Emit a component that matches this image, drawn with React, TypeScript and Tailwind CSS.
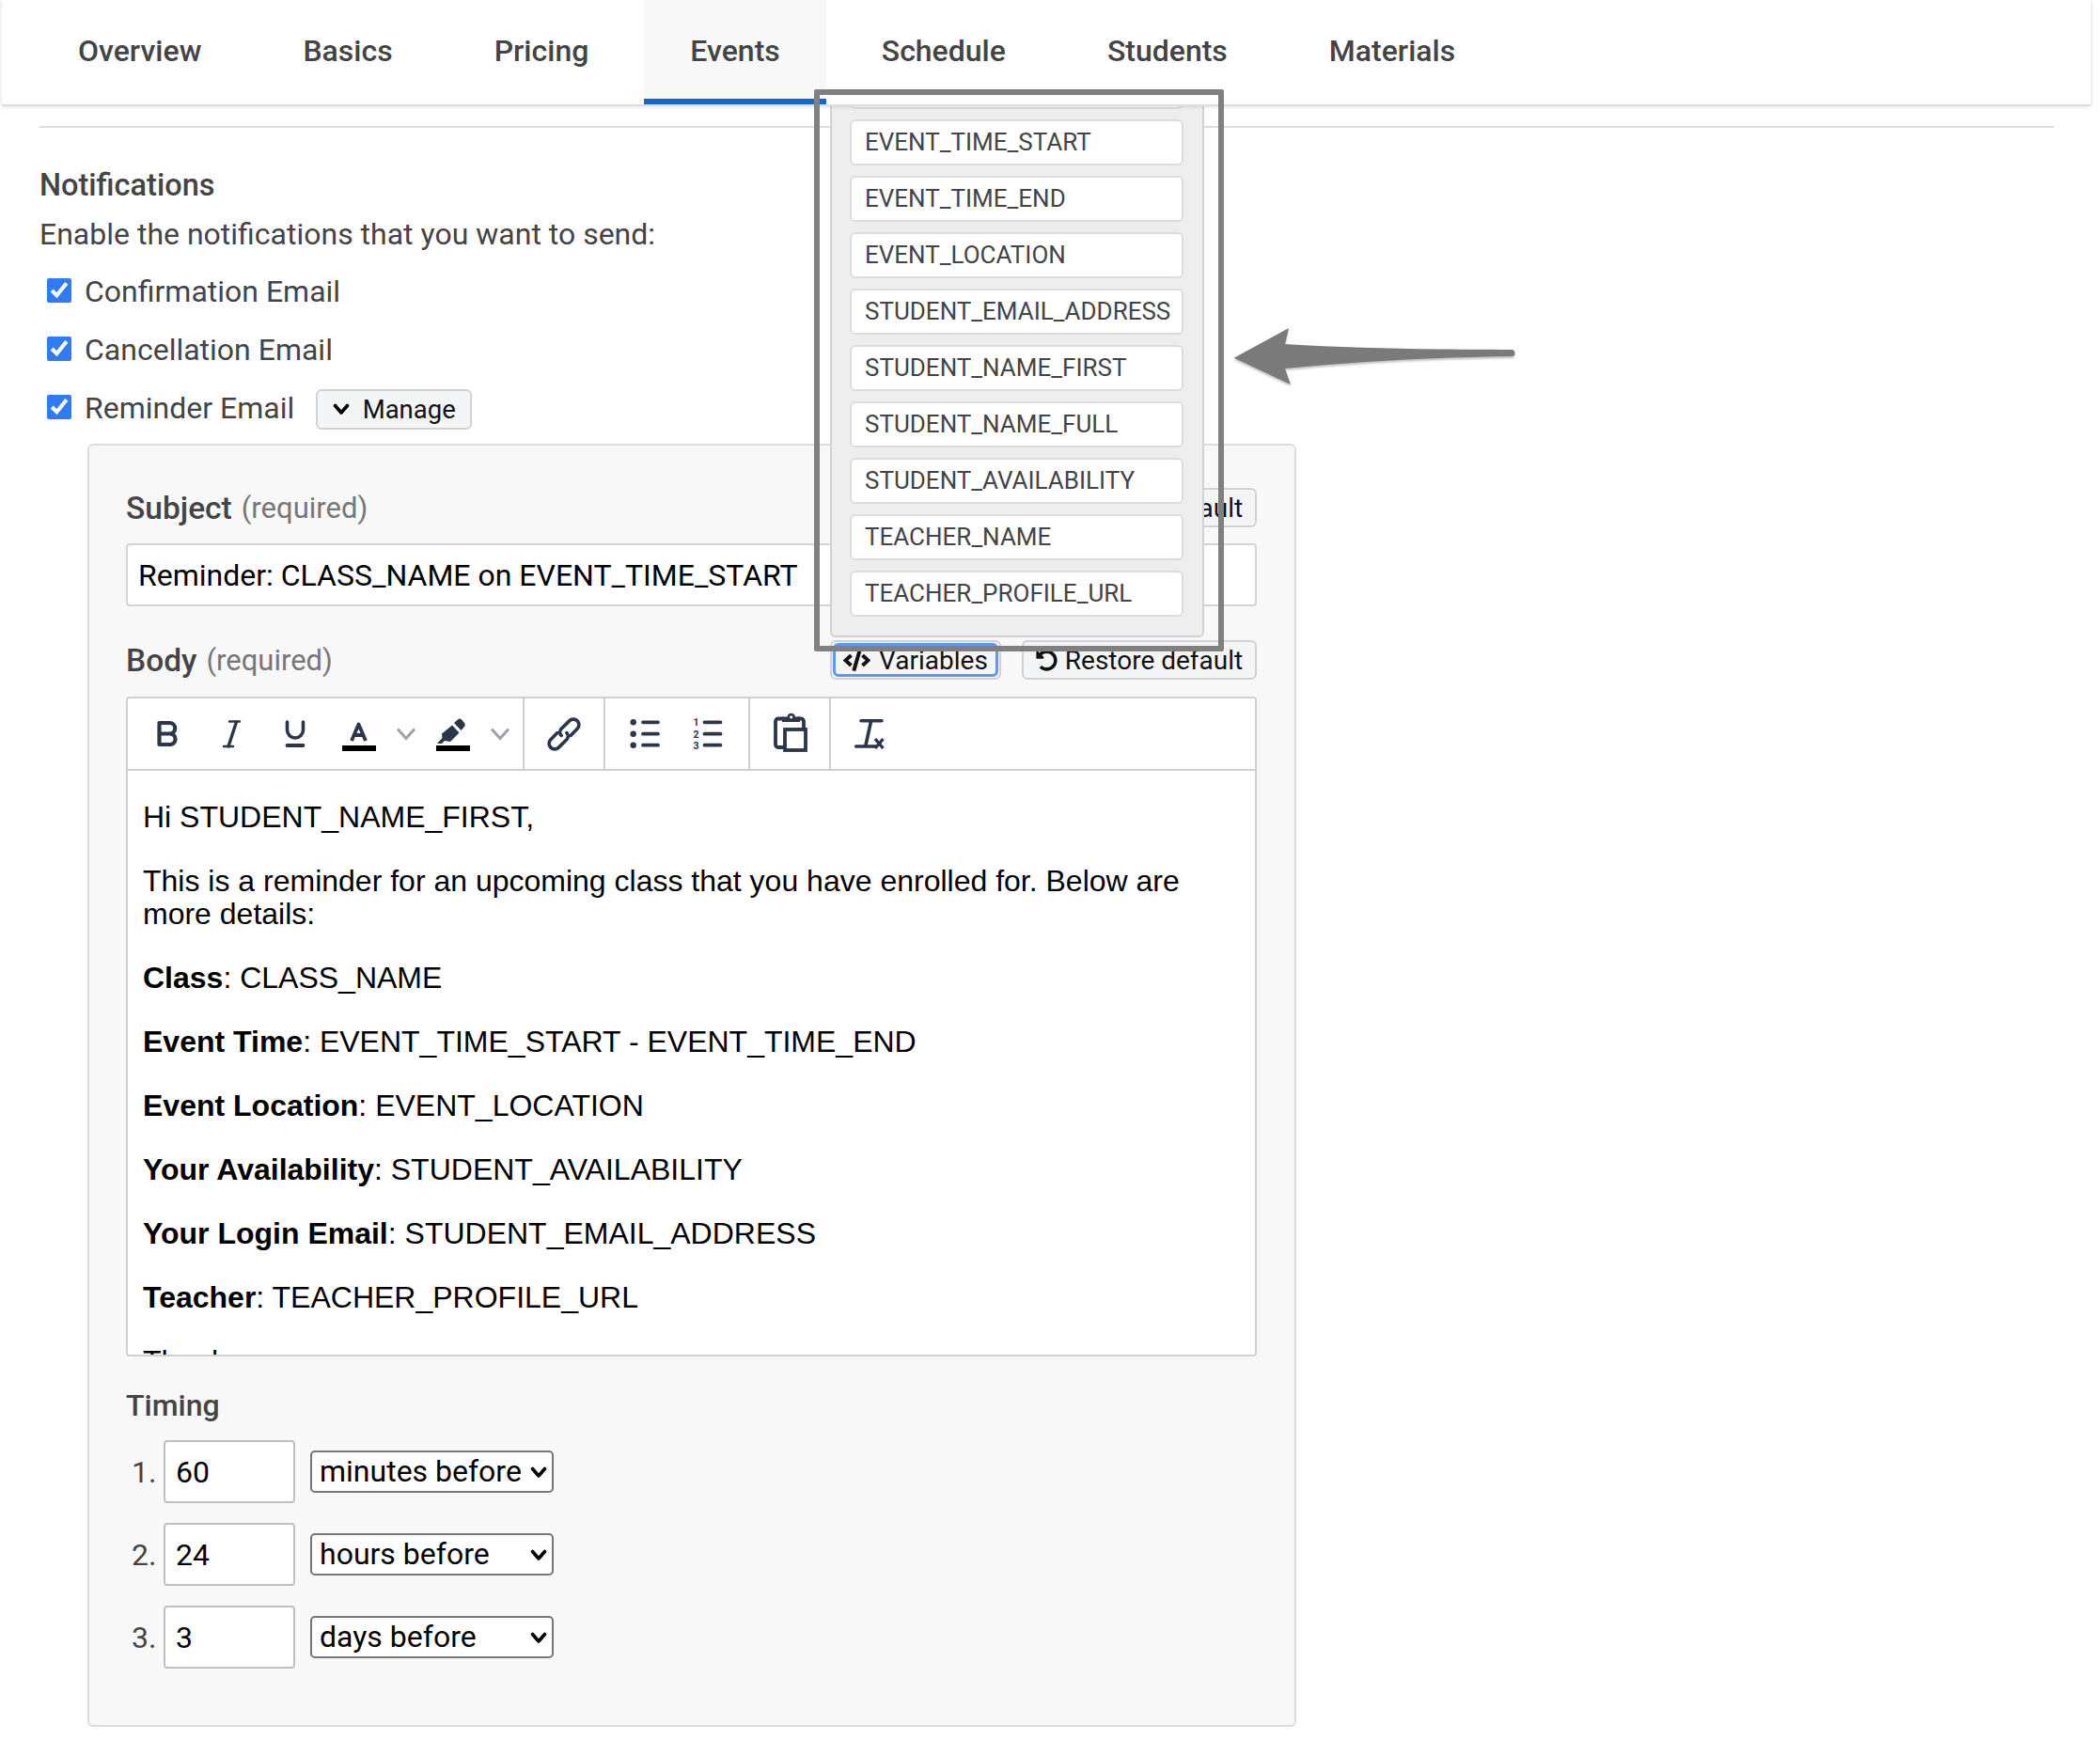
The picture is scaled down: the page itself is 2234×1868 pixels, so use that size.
import React from 'react';
import { FaCode, FaUndoAlt } from 'react-icons/fa';

const tabs = ['Overview', 'Basics', 'Pricing', 'Events', 'Schedule', 'Students', 'Materials'];

const variables = [
  'CLASS_NAME',
  'EVENT_TIME_START',
  'EVENT_TIME_END',
  'EVENT_LOCATION',
  'STUDENT_EMAIL_ADDRESS',
  'STUDENT_NAME_FIRST',
  'STUDENT_NAME_FULL',
  'STUDENT_AVAILABILITY',
  'TEACHER_NAME',
  'TEACHER_PROFILE_URL',
];

const timing = [
  { value: '60', unit: 'minutes before' },
  { value: '24', unit: 'hours before' },
  { value: '3', unit: 'days before' },
];

const INK = '#2b3648';

const ToolButton: React.FC<{ children: React.ReactNode; narrow?: boolean }> = ({ children, narrow }) => (
  <div className={`flex items-center justify-center h-full ${narrow ? 'w-[32px]' : 'w-[68px]'}`}>{children}</div>
);

const Icon: React.FC<{ children: React.ReactNode }> = ({ children }) => (
  <svg width="40" height="40" viewBox="0 0 40 40" fill="none" stroke={INK} strokeLinecap="round" strokeLinejoin="round" className="overflow-visible">
    {children}
  </svg>
);

const Chevron = () => (
  <svg width="24" height="16" viewBox="0 0 24 16" fill="none" stroke="#9ca3af" strokeWidth="3">
    <path d="M3 2.5 L12 12.5 L21 2.5" />
  </svg>
);

const Caret = () => (
  <svg width="18" height="13" viewBox="0 0 18 13" fill="none" stroke="#000" strokeWidth="3.6" strokeLinecap="round" strokeLinejoin="round">
    <path d="M2.5 2.5 L9 10 L15.5 2.5" />
  </svg>
);

const RestoreButton = () => (
  <button className="flex items-center justify-center gap-[8px] w-[250px] h-[42px] pt-[1px] rounded-[6px] border-2 border-[#d0d2d6] bg-[#f4f5f7] text-[28px] text-[#111]">
    <FaUndoAlt className="w-[23px] h-[23px]" />
    Restore default
  </button>
);

const VariablesButton = () => (
  <button className="w-[182px] h-[42px] rounded-[6px] border-2 border-[#d0d2d6] bg-[#f4f5f7] p-[1px] text-[28px] text-[#111]">
    <span className="flex items-center justify-center gap-[9px] w-full h-full pt-[1px] rounded-[6px] border-[3px] border-[#5a97f7]">
      <FaCode className="w-[29px] h-[25px]" />
      Variables
    </span>
  </button>
);

const Check: React.FC<{ label: string; children?: React.ReactNode }> = ({ label, children }) => (
  <div className="flex items-center h-[44px]">
    <input type="checkbox" defaultChecked className="w-[26px] h-[26px] m-0 ml-[8px] accent-[#2f7bf6]" />
    <span className="ml-[14px] pt-[2px] text-[32px] leading-[44px]">{label}</span>
    {children}
  </div>
);

const Paragraph: React.FC<{ children: React.ReactNode }> = ({ children }) => (
  <p className="mb-[33px] text-[32px] leading-[35px] text-black">{children}</p>
);

export default function App() {
  return (
    <div className="relative w-[2234px] h-[1868px] overflow-hidden bg-white font-[Roboto,sans-serif] text-[#444]">
      {/* Tabs */}
      <div className="relative z-20 ml-[2px] w-[2222px] h-[113px] bg-white border-b-2 border-[#deded9] shadow-[0_0_4px_rgba(0,0,0,0.18)] pl-[32px] flex gap-[10px]">
        {tabs.map((tab) => (
          <div
            key={tab}
            className={`px-[49px] h-[111px] flex items-center text-[32px] font-medium ${
              tab === 'Events' ? 'bg-[#f8f8f8] border-b-[6px] border-[#1a66c4] pt-[3px]' : 'pb-[3px]'
            }`}
          >
            {tab}
          </div>
        ))}
      </div>

      <div className="pl-[42px] pr-[49px]">
        <div className="mt-[21px] h-[2px] bg-[#deded9]" />
        <div className="mt-[39px] text-[32.5px] leading-[44px] font-medium">Notifications</div>
        <div className="mt-[8px] text-[32px] leading-[44px]">Enable the notifications that you want to send:</div>

        <div className="mt-[16px] flex flex-col gap-[18px]">
          <Check label="Confirmation Email" />
          <Check label="Cancellation Email" />
          <Check label="Reminder Email">
            <button className="ml-[23px] mt-[5px] w-[166px] h-[43px] flex items-center justify-center gap-[14px] rounded-[6px] border-2 border-[#d0d2d6] bg-[#f4f5f7] text-[27.5px] text-[#111]">
              <Caret />
              Manage
            </button>
          </Check>
        </div>

        {/* Reminder settings */}
        <div className="ml-[51px] mt-[17px] w-[1286px] rounded-[6px] border-2 border-[#dcdcdc] bg-[#f8f8f8] pl-[39px] pt-[45px] pb-[60px]">
          <div className="w-[1203px] h-[42px] flex items-center">
            <span className="pt-[2px] text-[33.5px] font-medium">Subject</span>
            <span className="ml-[10px] pt-[2px] text-[31px] text-[#777]">(required)</span>
            <div className="ml-auto flex gap-[22px]">
              <VariablesButton />
              <RestoreButton />
            </div>
          </div>
          <div className="mt-[17px] w-[1203px] h-[67px] rounded-[4px] border-2 border-[#d4d4d4] bg-white pl-[11px] pt-[1px] flex items-center text-[32px] text-black">
            Reminder: CLASS_NAME on EVENT_TIME_START
          </div>

          <div className="mt-[36px] w-[1203px] h-[42px] flex items-center">
            <span className="pt-[2px] text-[33.5px] font-medium">Body</span>
            <span className="ml-[10px] pt-[2px] text-[31px] text-[#777]">(required)</span>
            <div className="ml-auto flex gap-[22px]">
              <VariablesButton />
              <RestoreButton />
            </div>
          </div>

          {/* Editor */}
          <div className="mt-[18px] w-[1203px] h-[702px] overflow-hidden rounded-[4px] border-2 border-[#cdd0d4] bg-white">
            <div className="h-[77px] flex border-b-2 border-[#cdd0d4]">
              <div className="flex px-[8px] border-r-2 border-[#cdd0d4]">
                <ToolButton>
                  <Icon>
                    <path d="M11.5 8 H22.5 a5.7 5.7 0 0 1 0 11.5 H11.5 Z M11.5 19.5 H23.5 a5.8 5.8 0 0 1 0 11.5 H11.5 Z" strokeWidth="4.2" />
                  </Icon>
                </ToolButton>
                <ToolButton>
                  <Icon>
                    <path d="M18 6.5 H29 M12 33 H22" strokeWidth="2.4" />
                    <path d="M25.5 7 L17 33" strokeWidth="3.4" />
                  </Icon>
                </ToolButton>
                <ToolButton>
                  <Icon>
                    <path d="M11.5 7 V15.5 a8.5 8.5 0 0 0 17 0 V7" strokeWidth="3.6" />
                    <path d="M11.5 32 H28.5" strokeWidth="3.8" />
                  </Icon>
                </ToolButton>
                <ToolButton>
                  <Icon>
                    <path d="M12 27 L19.5 9.5 L27 27 M14.5 21 H24.5" strokeWidth="3.8" strokeLinecap="butt" />
                    <rect x="2" y="32" width="36" height="6" fill="#000" stroke="none" />
                  </Icon>
                </ToolButton>
                <ToolButton narrow>
                  <Chevron />
                </ToolButton>
                <ToolButton>
                  <Icon>
                    <path d="M21 8 L25 4.5 a3 3 0 0 1 4 0 L32 8 a3 3 0 0 1 0 4 L28.5 16 Z" fill={INK} stroke="none" />
                    <path d="M19 10.5 L26.5 18.5 L17 28 L11 27 L8 30 L3 30 L8.5 24 L8 19.5 Z" fill={INK} stroke="none" />
                    <rect x="2" y="32" width="36" height="6" fill="#000" stroke="none" />
                  </Icon>
                </ToolButton>
                <ToolButton narrow>
                  <Chevron />
                </ToolButton>
              </div>
              <div className="flex px-[8px] border-r-2 border-[#cdd0d4]">
                <ToolButton>
                  <Icon>
                    <g transform="rotate(-45 20 20)" strokeWidth="3.6">
                      <path d="M16 14 H6 a6 6 0 0 0 0 12 H18 a5 5 0 0 0 5 -5" />
                      <path d="M24 26 H34 a6 6 0 0 0 0 -12 H22 a5 5 0 0 0 -5 5" />
                    </g>
                  </Icon>
                </ToolButton>
              </div>
              <div className="flex px-[8px] border-r-2 border-[#cdd0d4]">
                <ToolButton>
                  <Icon>
                    <circle cx="7.7" cy="7.3" r="3.2" fill={INK} stroke="none" />
                    <circle cx="7.7" cy="19.7" r="3.2" fill={INK} stroke="none" />
                    <circle cx="7.7" cy="31.7" r="3.2" fill={INK} stroke="none" />
                    <path d="M18 7.3 H34 M18 19.7 H34 M18 31.7 H34" strokeWidth="3.8" />
                  </Icon>
                </ToolButton>
                <ToolButton>
                  <Icon>
                    <text x="3.5" y="11" fontSize="10.5" fontWeight="700" fill={INK} stroke="none">1</text>
                    <text x="3.5" y="23.5" fontSize="10.5" fontWeight="700" fill={INK} stroke="none">2</text>
                    <text x="3.5" y="35.5" fontSize="10.5" fontWeight="700" fill={INK} stroke="none">3</text>
                    <path d="M15.5 7.3 H32.5 M15.5 19.7 H32.5 M15.5 31.7 H32.5" strokeWidth="3.8" />
                  </Icon>
                </ToolButton>
              </div>
              <div className="flex px-[8px] border-r-2 border-[#cdd0d4]">
                <ToolButton>
                  <Icon>
                    <path d="M13 3.5 H8 a3 3 0 0 0 -3 3 V31 a3 3 0 0 0 3 3 H14 M29 3.5 H32 a3 3 0 0 1 3 3 V14" strokeWidth="3.8" />
                    <path d="M12 1.5 h5.5 a4.3 4.3 0 0 1 8.5 0 h5 v5.5 h-19 Z" fill={INK} stroke="none" />
                    <circle cx="21.7" cy="1.8" r="1.6" fill="#fff" stroke="none" />
                    <rect x="15" y="15" width="22" height="22" strokeWidth="3.8" strokeLinejoin="miter" />
                  </Icon>
                </ToolButton>
              </div>
              <div className="flex px-[8px]">
                <ToolButton>
                  <Icon>
                    <path d="M10 5.7 H32 M20.7 5.7 L14.7 33 M4.7 33 H25.7" strokeWidth="3.6" />
                    <path d="M25 25 L33.5 35 M33.5 25 L25 35" strokeWidth="3.4" strokeLinecap="butt" />
                  </Icon>
                </ToolButton>
              </div>
            </div>
            <div className="pl-[16px] pt-[32px] pr-[40px] font-['Liberation_Sans',sans-serif]">
              <Paragraph>Hi STUDENT_NAME_FIRST,</Paragraph>
              <Paragraph>This is a reminder for an upcoming class that you have enrolled for. Below are more details:</Paragraph>
              <Paragraph><strong>Class</strong>: CLASS_NAME</Paragraph>
              <Paragraph><strong>Event Time</strong>: EVENT_TIME_START - EVENT_TIME_END</Paragraph>
              <Paragraph><strong>Event Location</strong>: EVENT_LOCATION</Paragraph>
              <Paragraph><strong>Your Availability</strong>: STUDENT_AVAILABILITY</Paragraph>
              <Paragraph><strong>Your Login Email</strong>: STUDENT_EMAIL_ADDRESS</Paragraph>
              <Paragraph><strong>Teacher</strong>: TEACHER_PROFILE_URL</Paragraph>
              <Paragraph>Thanks</Paragraph>
            </div>
          </div>

          {/* Timing */}
          <div className="mt-[30px] text-[32px] leading-[44px] font-medium">Timing</div>
          <div className="mt-[15px] flex flex-col gap-[21px]">
            {timing.map((row, i) => (
              <div key={row.value} className="flex items-center h-[67px]">
                <span className="w-[40px] pl-[6px] text-[32px]">{i + 1}.</span>
                <div className="w-[140px] h-[67px] flex items-center pl-[11px] rounded-[4px] border-2 border-[#c0c0c0] bg-white text-[32px] text-black">
                  {row.value}
                </div>
                <div className="relative ml-[16px]">
                  <select
                    defaultValue={row.unit}
                    className="block appearance-none w-[259px] h-[45px] pl-[8px] pb-[1px] rounded-[5px] border-2 border-[#767676] bg-white text-[32px] leading-[36px] text-black"
                  >
                    <option>minutes before</option>
                    <option>hours before</option>
                    <option>days before</option>
                  </select>
                  <span className="absolute right-[7px] top-[17px] pointer-events-none">
                    <Caret />
                  </span>
                </div>
              </div>
            ))}
          </div>
        </div>
      </div>

      {/* Variables menu */}
      <div className="absolute z-10 left-[883px] top-[56px] w-[398px] rounded-[6px] border-2 border-[#d0d2d6] bg-[#eeeeee] pl-[19px] pr-[20px] pt-[9px] pb-[20px] flex flex-col gap-[11px]">
        {variables.map((name) => (
          <div key={name} className="h-[49px] flex items-center pl-[14px] rounded-[6px] border-2 border-[#dcdcd8] bg-white text-[26px] text-[#444]">
            {name}
          </div>
        ))}
      </div>

      {/* Annotation */}
      <div className="absolute z-30 left-[866px] top-[95px] w-[436px] h-[598px] border-[6px] border-[#808080] rounded-[2px]" />
      <svg className="absolute z-30 left-[1300px] top-[340px] drop-shadow-[0_2px_1px_rgba(0,0,0,0.25)]" width="320" height="80" viewBox="0 0 320 80">
        <path d="M12.7 40.7 L71 9 L67 26 C150 31 240 32 308 32 A3.5 3.5 0 0 1 308 39 C230 40 150 44 67 52 L73 69 Z" fill="#7a7a7a" />
      </svg>
    </div>
  );
}
